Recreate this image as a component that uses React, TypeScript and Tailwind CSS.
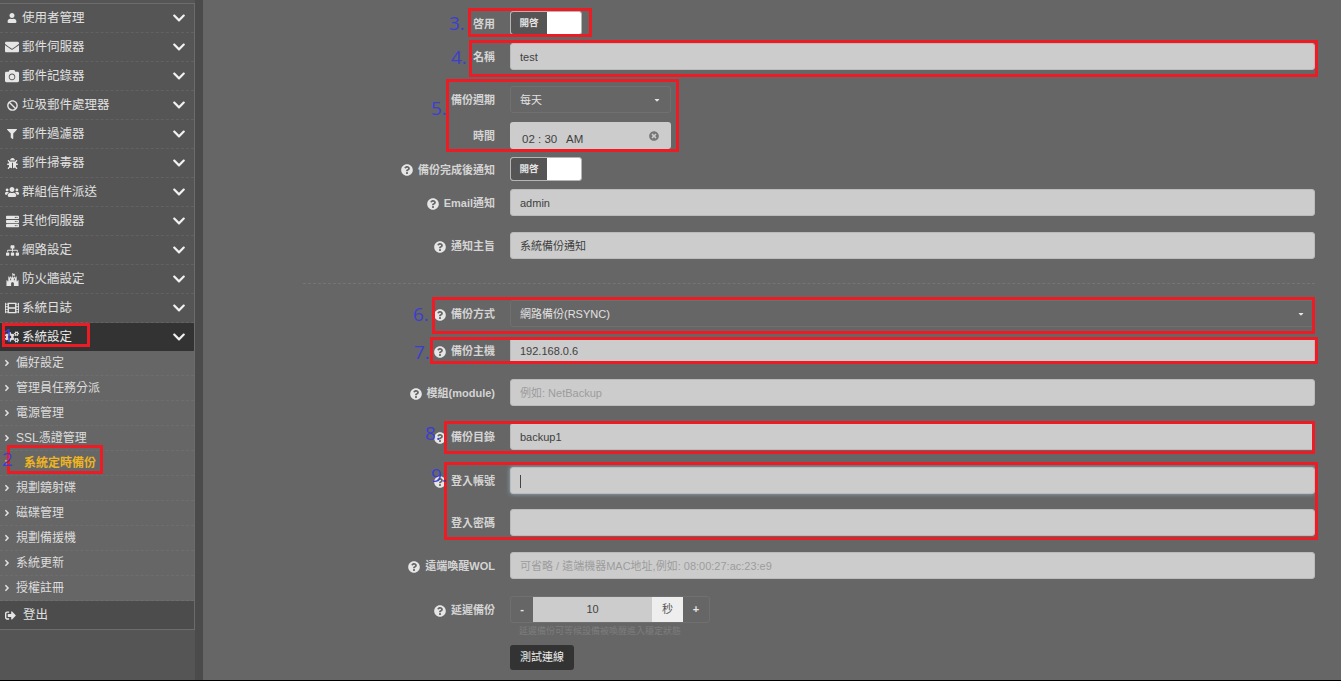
import type { ReactNode } from 'react';
import {
  FaBan,
  FaBug,
  FaCamera,
  FaChevronDown,
  FaCogs,
  FaEnvelope,
  FaFilm,
  FaFilter,
  FaFortAwesome,
  FaQuestionCircle,
  FaServer,
  FaSignOutAlt,
  FaSitemap,
  FaTimesCircle,
  FaUser,
  FaUsers,
  FaAngleRight,
  FaCaretDown,
} from 'react-icons/fa';

const menuTop = [
  { label: '使用者管理', icon: <FaUser size={10} /> },
  { label: '郵件伺服器', icon: <FaEnvelope size={14} /> },
  { label: '郵件記錄器', icon: <FaCamera size={14} /> },
  { label: '垃圾郵件處理器', icon: <FaBan size={11} /> },
  { label: '郵件過濾器', icon: <FaFilter size={10} /> },
  { label: '郵件掃毒器', icon: <FaBug size={11} /> },
  { label: '群組信件派送', icon: <FaUsers size={14} /> },
  { label: '其他伺服器', icon: <FaServer size={13} /> },
  { label: '網路設定', icon: <FaSitemap size={13} /> },
  { label: '防火牆設定', icon: <FaFortAwesome size={13} /> },
  { label: '系統日誌', icon: <FaFilm size={14} /> },
];

const subMenu = ['偏好設定', '管理員任務分派', '電源管理', 'SSL憑證管理', '系統定時備份', '規劃鏡射碟', '磁碟管理', '規劃備援機', '系統更新', '授權註冊'];

const boxes = [
  'left-[2px] top-[323px] w-[88px] h-[24px]',
  'left-[7px] top-[445px] w-[96px] h-[29px]',
  'left-[468px] top-[8px] w-[124px] h-[29px]',
  'left-[469px] top-[40px] w-[849px] h-[37px]',
  'left-[446px] top-[79px] w-[233px] h-[73px]',
  'left-[432px] top-[297px] w-[883px] h-[37px]',
  'left-[430px] top-[337px] w-[888px] h-[27px]',
  'left-[444px] top-[421px] w-[871px] h-[33px]',
  'left-[444px] top-[462px] w-[874px] h-[78px]',
];

const marks = [
  { text: '1', cls: 'left-[3px] top-[323px] font-["Liberation_Serif",serif]' },
  { text: '2', cls: 'left-[2px] top-[447px] font-["Liberation_Serif",serif]' },
  { text: '3.', cls: 'left-[449px] top-[11px]' },
  { text: '4.', cls: 'left-[451px] top-[45px]' },
  { text: '5.', cls: 'left-[431px] top-[96px]' },
  { text: '6.', cls: 'left-[413px] top-[302px]' },
  { text: '7.', cls: 'left-[414px] top-[340px]' },
  { text: '8.', cls: 'left-[425px] top-[421px]' },
  { text: '9.', cls: 'left-[431px] top-[463px]' },
];

function Label({ text, help }: { text: string; help?: boolean }) {
  return (
    <label className="w-[307px] shrink-0 pr-[15px] pt-[2px] flex items-center justify-end gap-[5px] text-[11px] font-bold text-[#d4d4d4]">
      {help && <FaQuestionCircle size={12} className="text-[#e6e6e6]" />}
      {text}
    </label>
  );
}

function Row({ label, help, className = '', children }: { label: string; help?: boolean; className?: string; children: ReactNode }) {
  return (
    <div className={`flex items-center ${className}`}>
      <Label text={label} help={help} />
      {children}
    </div>
  );
}

function TextBox({ value, placeholder, focus }: { value?: string; placeholder?: string; focus?: boolean }) {
  return (
    <div
      className={`w-[805px] h-[27px] rounded-[3px] bg-[#cccccc] border border-[#bbbbbb] px-[9px] pt-[2px] flex items-center text-[11px] ${
        placeholder ? 'text-[#9c9c9c]' : 'text-[#3f3f3f]'
      } ${focus ? 'shadow-[0_0_4px_#8fb0c8]' : ''}`}
    >
      {value ?? placeholder}
      {focus && <span className="w-px h-[13px] bg-[#444444]" />}
    </div>
  );
}

function Toggle() {
  return (
    <div className="w-[72px] h-[24px] rounded-[3px] border border-[#b5b5b5] bg-white flex overflow-hidden">
      <span className="w-[36px] bg-[#555555] text-[#e4e4e4] text-[9.5px] font-bold flex items-center justify-center">開啓</span>
    </div>
  );
}

function SelectBox({ value, className }: { value: string; className: string }) {
  return (
    <div className={`h-[27px] rounded-[3px] border border-[#707070] bg-[#666666] px-[9px] pt-[2px] flex items-center justify-between text-[11px] text-[#e2e2e2] ${className}`}>
      {value}
      <FaCaretDown size={8} className="text-[#e6e6e6] -mt-[2px]" />
    </div>
  );
}

export default function App() {
  return (
    <div className='relative flex h-[681px] w-[1341px] overflow-hidden bg-[#666666] border-b border-black font-["Liberation_Sans","Noto_Sans_CJK_TC",sans-serif]'>
      <aside className="w-[195px] shrink-0 bg-[#555555] pt-[3px]">
        <div className="border-y border-r border-[#6c6c6c]">
          {menuTop.map((item) => (
            <div key={item.label} className="h-[29px] flex items-center pl-[5px] pr-[8px] border-b border-dashed border-[#626262] text-[12.5px] text-[#e0e0e0]">
              <span className="w-[14px] flex justify-center text-[#e6e6e6] shrink-0">{item.icon}</span>
              <span className="ml-[3px]">{item.label}</span>
              <FaChevronDown size={14} className="ml-auto text-[#f2f2f2]" />
            </div>
          ))}
          <div className="h-[28px] flex items-center pl-[5px] pr-[8px] bg-[#333333] text-[12.5px] text-[#e8e8e8]">
            <FaCogs size={14} className="shrink-0 text-[#dddddd]" />
            <span className="ml-[3px]">系統設定</span>
            <FaChevronDown size={14} className="ml-auto text-[#f2f2f2]" />
          </div>
          {subMenu.map((item, i) => (
            <div key={item} className={`h-[25px] flex items-center pl-[2px] bg-[#666666] border-b border-dashed border-[#6e6e6e] text-[12px] ${i === 4 ? 'font-bold text-[#eeb422]' : 'text-[#dddddd]'}`}>
              <FaAngleRight size={10} className={i === 4 ? 'text-[#eeb422]' : 'text-[#e0e0e0]'} />
              <span className={i === 4 ? 'ml-[12px]' : 'ml-[4px]'}>{item}</span>
            </div>
          ))}
          <div className="h-[28px] flex items-center pl-[5px] bg-[#4c4c4c] text-[12.5px] text-[#e0e0e0]">
            <FaSignOutAlt size={11} className="text-[#e6e6e6]" />
            <span className="ml-[7px]">登出</span>
          </div>
        </div>
      </aside>
      <div className="w-[8px] shrink-0 bg-[#4b4b4b]" />

      <main className="flex-1 pt-[11px]">
        <Row label="啓用"><Toggle /></Row>
        <Row label="名稱" className="mt-[8px]"><TextBox value="test" /></Row>
        <Row label="備份週期" className="mt-[16px]"><SelectBox value="每天" className="w-[161px]" /></Row>
        <Row label="時間" className="mt-[9px]">
          <div className="w-[161px] h-[27px] rounded-[3px] bg-[#cccccc] pl-[12px] pr-[12px] pt-[9px] flex items-center justify-between text-[11.5px] text-[#3f3f3f]">
            <span className="whitespace-pre">02 : 30   AM</span>
            <FaTimesCircle size={10} className="text-[#777777] -mt-[9px]" />
          </div>
        </Row>
        <Row label="備份完成後通知" help className="mt-[8px]"><Toggle /></Row>
        <Row label="Email通知" help className="mt-[8px]"><TextBox value="admin" /></Row>
        <Row label="通知主旨" help className="mt-[16px]"><TextBox value="系統備份通知" /></Row>

        <div className="ml-[100px] mt-[24px] mr-[26px] border-t border-dashed border-[#757575]" />

        <Row label="備份方式" help className="mt-[16px]"><SelectBox value="網路備份(RSYNC)" className="w-[805px]" /></Row>
        <Row label="備份主機" help className="mt-[10px]"><TextBox value="192.168.0.6" /></Row>
        <Row label="模組(module)" help className="mt-[15px]"><TextBox placeholder="例如: NetBackup" /></Row>
        <Row label="備份目錄" help className="mt-[17px]"><TextBox value="backup1" /></Row>
        <Row label="登入帳號" help className="mt-[17px]"><TextBox value="" focus /></Row>
        <Row label="登入密碼" className="mt-[15px]"><TextBox value="" /></Row>
        <Row label="遠端喚醒WOL" help className="mt-[16px]"><TextBox placeholder="可省略 / 遠端機器MAC地址,例如: 08:00:27:ac:23:e9" /></Row>
        <Row label="延遲備份" help className="mt-[17px]">
          <div className="w-[200px] h-[27px] rounded-[3px] border border-[#707070] flex text-[11px] text-[#e6e6e6]">
            <span className="w-[22px] flex items-center justify-center font-bold">-</span>
            <span className="w-[119px] bg-[#cccccc] text-[#3f3f3f] flex items-center justify-center">10</span>
            <span className="w-[31px] bg-[#eeeeee] text-[#555555] flex items-center justify-center">秒</span>
            <span className="flex-1 flex items-center justify-center font-bold">+</span>
          </div>
        </Row>
        <p className="ml-[316px] mt-[2px] text-[9px] leading-[12px] text-[#7d7d7d]">延遲備份可等候設備被喚醒進入穩定狀態</p>
        <button className="ml-[307px] mt-[8px] w-[64px] h-[25px] rounded-[3px] bg-[#333333] text-[11px] text-[#eeeeee]">測試連線</button>
      </main>

      {boxes.map((cls) => (
        <div key={cls} className={`absolute border-[3px] border-[#ed1c24] pointer-events-none ${cls}`} />
      ))}
      {marks.map((m) => (
        <span key={m.text} className={`absolute text-[19px] leading-[24px] text-[#3b3fd0] font-["Open_Sans",sans-serif] ${m.cls}`}>{m.text}</span>
      ))}
    </div>
  );
}
